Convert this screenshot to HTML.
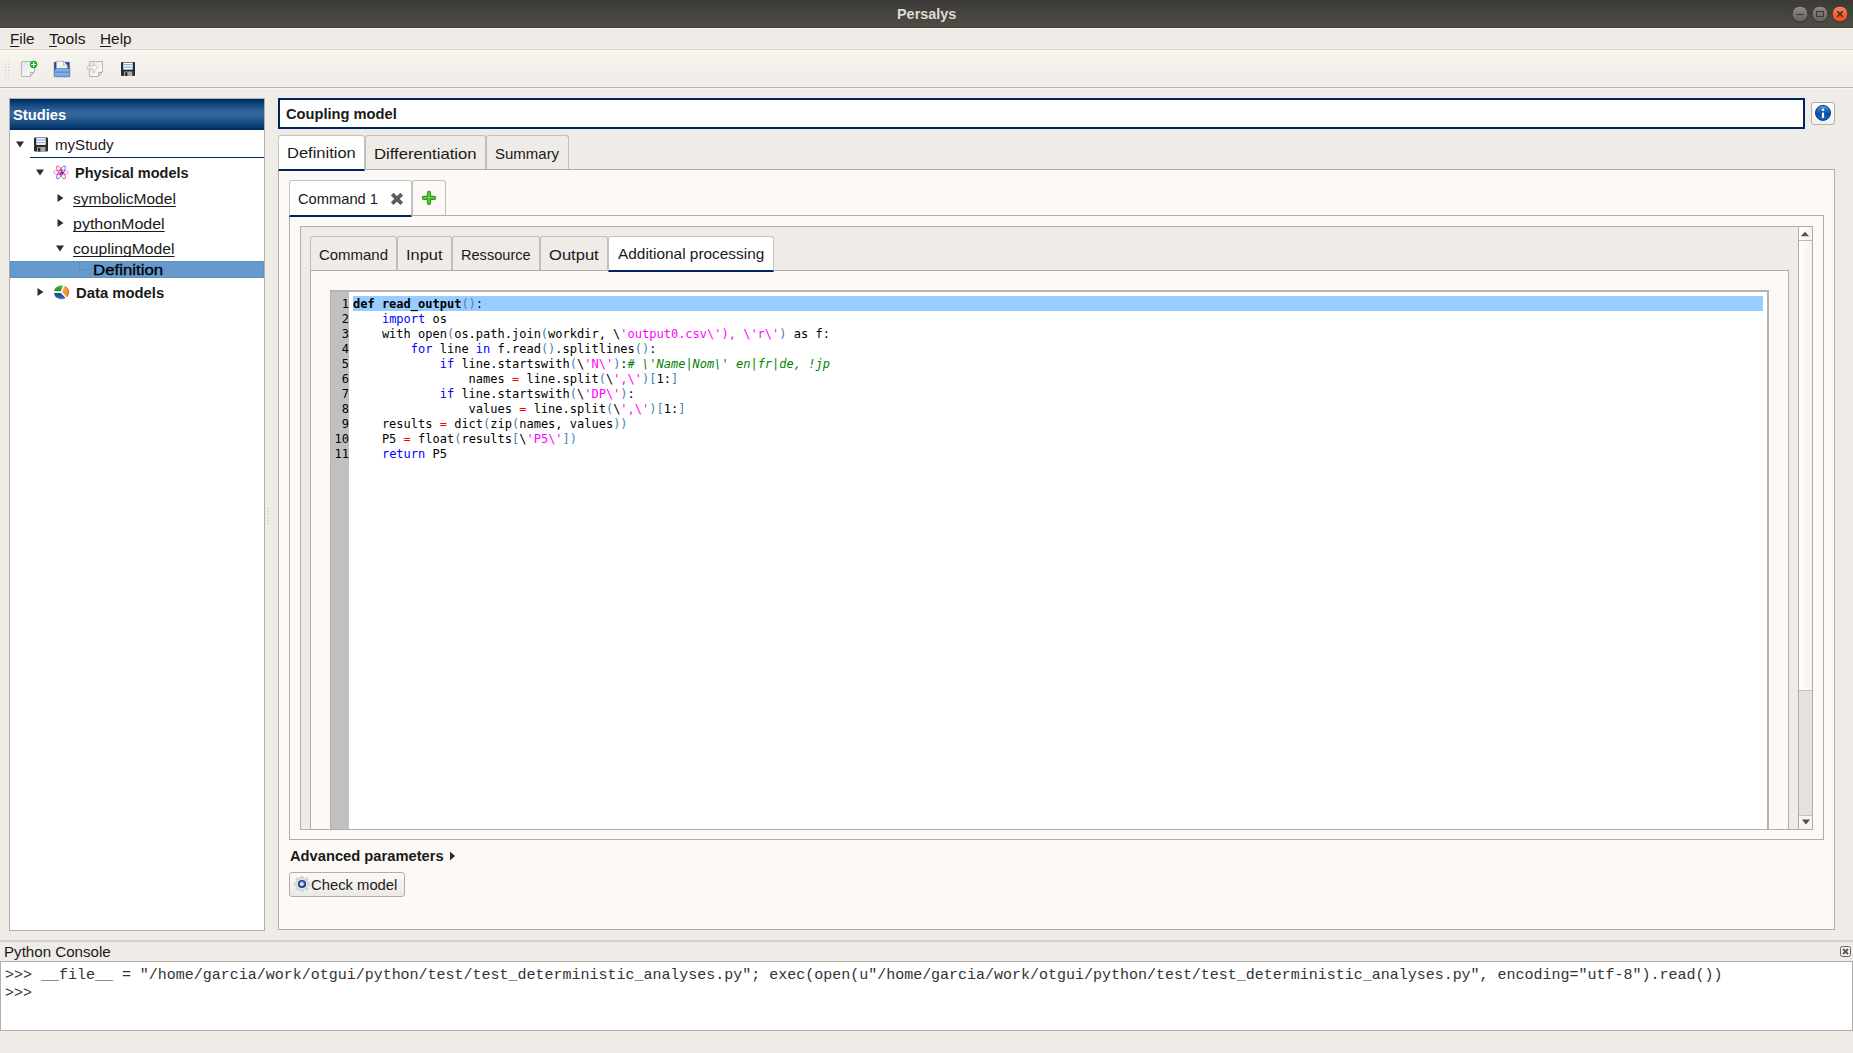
<!DOCTYPE html>
<html lang="en">
<head>
<meta charset="utf-8">
<title>Persalys</title>
<style>
*{box-sizing:border-box;margin:0;padding:0}
html,body{width:1853px;height:1053px;overflow:hidden;background:#efebe7}
body{position:relative;font-family:"Liberation Sans","DejaVu Sans",sans-serif;font-size:14.5px;color:#1a1a1a}
.a{position:absolute}
.t{position:absolute;white-space:nowrap;line-height:20px;height:20px;transform-origin:0 0}
.b{font-weight:bold}
.u{text-decoration:underline;text-underline-offset:2px;text-decoration-thickness:1px;text-decoration-skip-ink:none}
/* title bar */
#titlebar{left:0;top:0;width:1853px;height:29px;background:linear-gradient(#3b3a36,#4f4d46 27px,#45423b 27px,#45423b 28px,#f8f5f0 28px)}
#title{left:897px;top:4px;color:#dfdbd2;font-weight:bold;font-size:14.5px}
/* menu / toolbar */
#menubar{left:0;top:29px;width:1853px;height:20px;background:#efebe7}
#menuline{left:0;top:49px;width:1853px;height:1px;background:#d6d3ce}
#toolbar{left:0;top:50px;width:1853px;height:39px;background:linear-gradient(#fbf9f5 1px,#f7f4ee 1px,#f0ede8 34px,#f2efea 37px,#b8b4b0 37px,#b8b4b0 38px,#f8f5f1 38px)}
#toolline{left:0;top:87px;width:1853px;height:1px;background:#bab6af}
/* panels */
.frame{position:absolute;border:1px solid #b1aeaa;background:#fcf9f6}
.tab{position:absolute;border:1px solid #c0bebb;border-bottom:none;border-radius:3px 3px 0 0;background:#efebe7}
.tab.sel{background:#fff;border-color:#c6c3bd;border-bottom:2px solid #02245e;border-radius:3px 3px 0 0}
.k{color:#0000ff}.p{color:#4682b4}.s{color:#ff00ff}.o{color:#ff0000}.c{color:#008000;font-style:italic}.d{font-weight:bold}
pre{font-family:"DejaVu Sans Mono","Liberation Mono",monospace}
/*FIT*/
#m1{transform:scaleX(1.0509);margin-left:-0.37px}
#m2{transform:scaleX(1.0838);margin-left:0.07px}
#m3{transform:scaleX(1.0600);margin-left:-0.33px}
#studies{transform:scaleX(1.0140);margin-left:-0.27px}
#title{transform:scaleX(0.9944);margin-left:0.21px}
#t1{transform:scaleX(1.0389);margin-left:-0.34px}
#t2{transform:scaleX(0.9993);margin-left:-0.14px}
#t3{transform:scaleX(1.0727);margin-left:-0.33px}
#t4{transform:scaleX(1.1036);margin-left:-0.42px}
#t5{transform:scaleX(1.0860);margin-left:-0.27px}
#t6{transform:scaleX(1.1618);margin-left:-0.38px}
#t7{transform:scaleX(1.0224);margin-left:0.79px}
#r0{transform:scaleX(1.0109);margin-left:0.60px}
#r1{transform:scaleX(1.1366);margin-left:-0.44px}
#r2{transform:scaleX(1.1500);margin-left:-0.24px}
#r3{transform:scaleX(1.0334);margin-left:-0.34px}
#r4{transform:scaleX(1.0122);margin-left:-0.46px}
#s1{transform:scaleX(1.0312);margin-left:-0.24px}
#s2{transform:scaleX(1.1304);margin-left:-0.47px}
#s3{transform:scaleX(1.0048);margin-left:-0.31px}
#s4{transform:scaleX(1.1421);margin-left:-0.29px}
#s5{transform:scaleX(1.0612);margin-left:0.68px}
#adv{transform:scaleX(1.0140);margin-left:0.77px}
#chk{transform:scaleX(1.0205);margin-left:0.15px}
#pc{transform:scaleX(1.0425);margin-left:-0.43px}
/*ENDFIT*/
</style>
</head>
<body>
<!-- TITLE BAR -->
<div id="titlebar" class="a"></div>
<div id="title" class="t">Persalys</div>
<svg class="a" style="left:1790px;top:4px" width="60" height="20" viewBox="0 0 60 20">
<defs><linearGradient id="wg" x1="0" y1="0" x2="0" y2="1"><stop offset="0" stop-color="#8e8c84"/><stop offset="1" stop-color="#64625b"/></linearGradient>
<linearGradient id="wr" x1="0" y1="0" x2="0" y2="1"><stop offset="0" stop-color="#f68a62"/><stop offset=".5" stop-color="#ea6535"/><stop offset="1" stop-color="#e35420"/></linearGradient></defs>
<circle cx="10" cy="10" r="8" fill="url(#wg)" stroke="#34332f" stroke-width="1"/>
<circle cx="30" cy="10" r="8" fill="url(#wg)" stroke="#34332f" stroke-width="1"/>
<circle cx="50" cy="10" r="8" fill="url(#wr)" stroke="#3a2f29" stroke-width="1"/>
<path d="M6.200 10.500h7.600" stroke="#3b3a35" stroke-width="1.100"/>
<rect x="26.500" y="7.500" width="7" height="5" fill="none" stroke="#3b3a35" stroke-width="1.100"/>
<path d="M47.300 7.300l5.400 5.400M52.700 7.300l-5.400 5.400" stroke="#3a2413" stroke-width="1.300"/>
</svg>
<!-- MENU -->
<div id="menubar" class="a"></div>
<div id="menuline" class="a"></div>
<div id="toolbar" class="a"></div>
<div class="t" id="m1" style="left:10px;top:29px"><span class="u">F</span>ile</div>
<div class="t" id="m2" style="left:49px;top:29px"><span class="u">T</span>ools</div>
<div class="t" id="m3" style="left:100px;top:29px"><span class="u">H</span>elp</div>

<svg class="a" style="left:4px;top:60px" width="6" height="18" viewBox="0 0 6 18"><g fill="#cfccc6"><rect x="1" y="1" width="1" height="1"/><rect x="4" y="1" width="1" height="1"/><rect x="1" y="4" width="1" height="1"/><rect x="4" y="4" width="1" height="1"/><rect x="1" y="7" width="1" height="1"/><rect x="4" y="7" width="1" height="1"/><rect x="1" y="10" width="1" height="1"/><rect x="4" y="10" width="1" height="1"/><rect x="1" y="13" width="1" height="1"/><rect x="4" y="13" width="1" height="1"/><rect x="1" y="16" width="1" height="1"/><rect x="4" y="16" width="1" height="1"/></g></svg>
<!-- new -->
<svg class="a" style="left:20px;top:60px" width="18" height="18" viewBox="0 0 18 18">
<defs><linearGradient id="pg" x1="0" y1="0" x2="1" y2="1"><stop offset="0" stop-color="#e4e4e4"/><stop offset="1" stop-color="#ffffff"/></linearGradient></defs>
<path d="M2 1.5h12.5v10l-4.5 5H2a.6.6 0 0 1-.6-.6V2.100a.6.6 0 0 1 .6-.6z" fill="url(#pg)" stroke="#b5b5b5" stroke-width="1"/>
<path d="M10 16.500c.8-1 .9-2.600.4-4.300 1.500.6 3 .4 4.100-.7z" fill="#fff" stroke="#9a9a9a" stroke-width=".8"/>
<circle cx="13.600" cy="4.500" r="3.700" fill="#1fb01f"/><path d="M11.200 4.500h4.800M13.600 2.100v4.800" stroke="#fff" stroke-width="1.100"/>
</svg>
<!-- open -->
<svg class="a" style="left:53px;top:60px" width="18" height="18" viewBox="0 0 18 18">
<defs><linearGradient id="fb" x1="0" y1="0" x2="0" y2="1"><stop offset="0" stop-color="#9fc0e6"/><stop offset=".5" stop-color="#5b8fd0"/><stop offset=".55" stop-color="#8fb4e2"/><stop offset="1" stop-color="#6f9fda"/></linearGradient></defs>
<path d="M1.300 2.300h15v8h-15z" fill="#1f4f97" stroke="#163a72" stroke-width=".6"/>
<path d="M3.500 1.200h6.800l4 4.200v6h-10.800z" fill="#f4f4f4" stroke="#aaa" stroke-width=".7"/>
<path d="M10.300 1.200c.5 1.500.4 2.800 0 4.200 1.500-.5 2.800-.5 4 0z" fill="#fff" stroke="#999" stroke-width=".6"/>
<path d="M1.200 9.800l3-1.300h12.600v7.600a.7.7 0 0 1-.7.700H1.900a.7.700 0 0 1-.7-.7z" fill="url(#fb)" stroke="#3f6fb3" stroke-width=".7"/>
</svg>
<!-- import -->
<svg class="a" style="left:86px;top:60px" width="18" height="18" viewBox="0 0 18 18">
<path d="M4 1.500h12.500v10l-4.500 5H4a.6.6 0 0 1-.6-.6V2.100a.6.6 0 0 1 .6-.6z" fill="url(#pg)" stroke="#b5b5b5" stroke-width="1"/>
<path d="M12 16.500c.8-1 .9-2.600.4-4.300 1.500.6 3 .4 4.100-.7z" fill="#fff" stroke="#9a9a9a" stroke-width=".8"/>
<path d="M1.200 6.200h6v-2.600l4.300 3.900-4.300 3.900v-2.600h-6z" fill="#fff" stroke="#bdbdbd" stroke-width=".9" stroke-linejoin="round"/>
<path d="M6 11.500l1.500 2 2-2" fill="none" stroke="#c8c8c8" stroke-width=".9"/>
</svg>
<!-- save -->
<svg class="a" style="left:120px;top:60px" width="16" height="18" viewBox="0 0 16 18">
<rect x="1" y="2" width="14" height="14" rx="1" fill="#2b2b2f"/>
<rect x="3.300" y="2.600" width="9.400" height="7" fill="#fff"/>
<rect x="4.200" y="4" width="7.600" height="1.200" fill="#88aadd"/><rect x="4.200" y="6.600" width="7.600" height="1.200" fill="#88aadd"/>
<rect x="4" y="11.500" width="8.400" height="4.500" fill="#a9a9a9"/><rect x="5" y="12.300" width="2.400" height="3.700" fill="#2b2b2f"/>
</svg>

<div class="a" style="left:9px;top:98px;width:256px;height:833px;border:1px solid #b1aeaa;background:#fff"></div>
<div class="a" style="left:10px;top:99px;width:254px;height:31px;background:linear-gradient(#00275f 0%,#002d65 3%,#0c4178 14%,#27598f 32%,#32669a 42%,#34689b 48%,#306497 56%,#235790 66%,#134779 81%,#063a6f 93%,#002c64 97%,#00235b 100%)"></div>
<div class="t b" id="studies" style="left:13px;top:105px;color:#fff">Studies</div>
<!-- tree -->
<svg class="a" style="left:15px;top:140px" width="10" height="9" viewBox="0 0 10 9"><path d="M1 1.500h8l-4 6z" fill="#2e2e2e"/></svg>
<svg class="a" style="left:33px;top:137px" width="16" height="15" viewBox="0 0 16 15">
<rect x="1" y=".5" width="14" height="14" rx="1" fill="#2b2b2f"/><rect x="3.300" y="1.100" width="9.400" height="6.800" fill="#fff"/>
<rect x="4.200" y="2.500" width="7.600" height="1.200" fill="#88aadd"/><rect x="4.200" y="5" width="7.600" height="1.200" fill="#88aadd"/>
<rect x="4" y="10" width="8.400" height="4.500" fill="#a9a9a9"/><rect x="5" y="10.800" width="2.400" height="3.700" fill="#2b2b2f"/></svg>
<div class="t" id="t1" style="left:55px;top:135px">myStudy</div>
<div class="a" style="left:30px;top:157px;width:234px;height:1px;background:#02245e"></div>
<svg class="a" style="left:35px;top:168px" width="10" height="9" viewBox="0 0 10 9"><path d="M1 1.500h8l-4 6z" fill="#2e2e2e"/></svg>
<svg class="a" style="left:53px;top:165px" width="16" height="15" viewBox="0 0 16 15">
<g fill="none" stroke-width=".85"><ellipse cx="8" cy="7.400" rx="7.500" ry="2.300" stroke="#ff5cff"/><ellipse cx="8" cy="7.400" rx="7.500" ry="2.300" stroke="#ff4a4a" transform="rotate(58 8 7.400)"/><ellipse cx="8" cy="7.400" rx="7.500" ry="2.300" stroke="#5a5aff" transform="rotate(-58 8 7.400)"/></g>
<circle cx="8.300" cy="5.900" r="1.300" fill="#ff3000"/><circle cx="9.300" cy="7.800" r="1.200" fill="#1a1ad0"/><circle cx="7.300" cy="8.600" r="1.300" fill="#f02020"/><circle cx="7" cy="6.800" r=".9" fill="#8fe8f0"/><circle cx="9.600" cy="6.300" r=".8" fill="#8fe8f0"/></svg>
<div class="t b" id="t2" style="left:75px;top:163px">Physical models</div>
<svg class="a" style="left:56px;top:193px" width="9" height="10" viewBox="0 0 9 10"><path d="M1.500 1v8l6-4z" fill="#2e2e2e"/></svg>
<div class="t u" id="t3" style="left:73px;top:189px">symbolicModel</div>
<svg class="a" style="left:56px;top:218px" width="9" height="10" viewBox="0 0 9 10"><path d="M1.500 1v8l6-4z" fill="#2e2e2e"/></svg>
<div class="t u" id="t4" style="left:73px;top:214px">pythonModel</div>
<svg class="a" style="left:55px;top:244px" width="10" height="9" viewBox="0 0 10 9"><path d="M1 1.500h8l-4 6z" fill="#2e2e2e"/></svg>
<div class="t u" id="t5" style="left:73px;top:239px">couplingModel</div>
<div class="a" style="left:10px;top:261px;width:254px;height:17px;background:#6699cc;border:1px solid #5b90c9"></div>
<div class="a" style="left:79px;top:262px;width:11px;height:8px;border-left:1px solid #5e8dbf;border-bottom:1px solid #5e8dbf"></div>
<div class="t" id="t6" style="left:93px;top:260px;color:#000;-webkit-text-stroke:.3px #000">Definition</div>
<svg class="a" style="left:36px;top:287px" width="9" height="10" viewBox="0 0 9 10"><path d="M1.500 1v8l6-4z" fill="#2e2e2e"/></svg>
<svg class="a" style="left:53px;top:284px" width="17" height="17" viewBox="0 0 17 17">
<defs><linearGradient id="pgr" x1="0" y1="0" x2="0" y2="1"><stop offset="0" stop-color="#5cc63c"/><stop offset="1" stop-color="#15801a"/></linearGradient>
<linearGradient id="por" x1="0" y1="0" x2="1" y2="1"><stop offset="0" stop-color="#f8b45a"/><stop offset="1" stop-color="#ee8410"/></linearGradient>
<linearGradient id="pbl" x1="0" y1="0" x2="0" y2="1"><stop offset="0" stop-color="#1d4c8c"/><stop offset=".6" stop-color="#2a5c9c"/><stop offset="1" stop-color="#5aa0d8"/></linearGradient></defs>
<g stroke="#fff" stroke-width="1.400" stroke-linejoin="round">
<path d="M8.100 8.300L.4 8A7.900 7.300 0 0 1 11.300 1.300z" fill="url(#pgr)"/>
<path d="M8.100 8.300L11.300 1.300A7.900 7.300 0 0 1 13.600 14z" fill="url(#por)"/>
<path d="M8.100 8.300L13.600 14A7.900 7.300 0 0 1 .4 8z" fill="url(#pbl)"/></g>
<path d="M11.800 2.400A7 6.500 0 0 1 13.400 13" fill="none" stroke="#c65a14" stroke-width=".8"/>
</svg>
<div class="t b" id="t7" style="left:75px;top:283px">Data models</div>
<!-- splitter dots -->
<svg class="a" style="left:266px;top:508px" width="3" height="18" viewBox="0 0 3 18"><g fill="#bfbcb8"><rect x="1" y="0" width="1" height="1"/><rect x="1" y="3" width="1" height="1"/><rect x="1" y="6" width="1" height="1"/><rect x="1" y="9" width="1" height="1"/><rect x="1" y="12" width="1" height="1"/><rect x="1" y="15" width="1" height="1"/></g></svg>

<!-- title field -->
<div class="a" style="left:278px;top:98px;width:1527px;height:31px;border:2px solid #02245e;background:#fff"></div>
<div class="t b" id="r0" style="left:285px;top:104px">Coupling model</div>
<div class="a" style="left:1811px;top:102px;width:24px;height:23px;border:1px solid #b3b0ac;border-radius:3px;background:linear-gradient(#fefefd,#f3f0ed)"></div>
<svg class="a" style="left:1814px;top:104px" width="18" height="18" viewBox="0 0 18 18"><defs><linearGradient id="ig" x1="0" y1="0" x2="0" y2="1"><stop offset="0" stop-color="#6aa6dc"/><stop offset=".25" stop-color="#2f78c0"/><stop offset=".55" stop-color="#0a4c9c"/><stop offset=".85" stop-color="#0a68cc"/><stop offset="1" stop-color="#0a5cb8"/></linearGradient></defs><circle cx="9" cy="8.900" r="7.500" fill="url(#ig)" stroke="#013a88" stroke-width="1"/><circle cx="9" cy="5.800" r="1.250" fill="#fff"/><rect x="7.900" y="8.400" width="2.200" height="5.500" rx=".6" fill="#fff"/></svg>
<!-- main tab pane -->
<div class="frame" style="left:278px;top:169px;width:1557px;height:761px"></div>
<div class="tab sel" style="left:278px;top:135px;width:87px;height:36px"></div>
<div class="t" id="r1" style="left:287px;top:143px">Definition</div>
<div class="tab" style="left:365px;top:135px;width:121px;height:34px"></div>
<div class="t" id="r2" style="left:374px;top:144px">Differentiation</div>
<div class="tab" style="left:486px;top:135px;width:83px;height:34px"></div>
<div class="t" id="r3" style="left:495px;top:144px">Summary</div>
<!-- command tab pane -->
<div class="frame" style="left:289px;top:215px;width:1535px;height:625px"></div>
<div class="tab sel" style="left:289px;top:180px;width:123px;height:37px"></div>
<div class="t" id="r4" style="left:298px;top:189px">Command 1</div>
<svg class="a" style="left:390px;top:192px" width="14" height="14" viewBox="0 0 14 14"><path d="M2.200 2.200l9.500 9.500M11.700 2.200l-9.500 9.500" stroke="#5d5d5b" stroke-width="3.800" stroke-linecap="butt"/></svg>
<div class="tab" style="left:412px;top:180px;width:34px;height:35px;background:#fcf9f6"></div>
<svg class="a" style="left:421px;top:190px" width="16" height="16" viewBox="0 0 16 16"><path d="M8 2.800v10.300M2.900 7.950h10.200" stroke="#1f9410" stroke-width="4.200" stroke-linecap="round"/><path d="M8 2.800v10.300M2.900 7.950h10.200" stroke="#46b82c" stroke-width="2.600" stroke-linecap="round"/><path d="M8 2.900v10M3 7.600h10" stroke="#7fd862" stroke-width="1" stroke-linecap="round" opacity=".8"/></svg>
<!-- scroll area -->
<div class="a" id="scroll" style="left:300px;top:226px;width:1513px;height:604px;border:1px solid #b1aeaa;background:#efebe7;overflow:hidden">
  <div class="a" style="left:9px;top:43px;width:1479px;height:600px;border:1px solid #b1aeaa;background:#fcf9f6"></div>
  <div class="tab" style="left:9px;top:9px;width:87px;height:34px"></div>
  <div class="tab" style="left:96px;top:9px;width:55px;height:34px"></div>
  <div class="tab" style="left:151px;top:9px;width:88px;height:34px"></div>
  <div class="tab" style="left:239px;top:9px;width:68px;height:34px"></div>
  <div class="tab sel" style="left:307px;top:9px;width:166px;height:36px"></div>
  <!-- editor -->
  <div class="a" style="left:29px;top:63px;width:1439px;height:600px;border-top:2px solid #b7b3ac;border-right:2px solid #b7b3ac;background:#fff"></div>
  <div class="a" style="left:29px;top:65px;width:19px;height:600px;background:#c0c0c0;border-left:1px solid #b3b1ae"></div>
  <div class="a" style="left:52px;top:69px;width:1410px;height:15px;background:#99ccff"></div>
  <pre class="a" id="nums" style="left:29px;top:70px;width:19px;text-align:right;font-size:12px;line-height:15px;color:#000">1
2
3
4
5
6
7
8
9
10
11</pre>
  <pre class="a" id="code" style="left:52px;top:70px;font-size:12px;line-height:15px;color:#000"><span class="d">def read_output</span><span class="p">()</span>:
    <span class="k">import</span> os
    with open<span class="p">(</span>os.path.join<span class="p">(</span>workdir, \<span class="s">'output0.csv\'), \'r\'</span><span class="p">)</span> as f:
        <span class="k">for</span> line <span class="k">in</span> f.read<span class="p">()</span>.splitlines<span class="p">()</span>:
            <span class="k">if</span> line.startswith<span class="p">(</span>\<span class="s">'N\'</span><span class="p">)</span>:<span class="c"># \'Name|Nom\' en|fr|de, !jp</span>
                names <span class="o">=</span> line.split<span class="p">(</span>\<span class="s">',\'</span><span class="p">)[</span>1:<span class="p">]</span>
            <span class="k">if</span> line.startswith<span class="p">(</span>\<span class="s">'DP\'</span><span class="p">)</span>:
                values <span class="o">=</span> line.split<span class="p">(</span>\<span class="s">',\'</span><span class="p">)[</span>1:<span class="p">]</span>
    results <span class="o">=</span> dict<span class="p">(</span>zip<span class="p">(</span>names, values<span class="p">))</span>
    P5 <span class="o">=</span> float<span class="p">(</span>results<span class="p">[</span>\<span class="s">'P5\'</span><span class="p">])</span>
    <span class="k">return</span> P5</pre>
  <!-- scrollbar -->
  <div class="a" style="left:1497px;top:0;width:15px;height:602px;border-left:1px solid #b1aeaa;background:linear-gradient(90deg,#ffffff,#fbfaf8 40%,#f1efec)"></div>
  <div class="a" style="left:1498px;top:0;width:14px;height:14px;border-bottom:1px solid #bab7b3;background:linear-gradient(90deg,#ffffff,#fbfaf8 40%,#f2f0ed)"></div>
  <svg class="a" style="left:1499px;top:3px" width="10" height="8" viewBox="0 0 10 8"><path d="M.8 6.200h8.400l-4.200-4.400z" fill="#555"/></svg>
  <div class="a" style="left:1498px;top:463px;width:14px;height:125px;background:#e4e2de;border-top:1px solid #c5c2bc"></div>
  <div class="a" style="left:1498px;top:588px;width:14px;height:14px;border-top:1px solid #c5c2bc;background:#f6f5f3"></div>
  <svg class="a" style="left:1500px;top:591px" width="10" height="8" viewBox="0 0 10 8"><path d="M1 1.500h8l-4 5z" fill="#4a4a4a"/></svg>
</div>
<div class="t" id="s1" style="left:319px;top:245px">Command</div>
<div class="t" id="s2" style="left:406px;top:245px">Input</div>
<div class="t" id="s3" style="left:461px;top:245px">Ressource</div>
<div class="t" id="s4" style="left:549px;top:245px">Output</div>
<div class="t" id="s5" style="left:617px;top:244px">Additional processing</div>
<!-- bottom -->
<div class="t b" id="adv" style="left:289px;top:846px">Advanced parameters</div>
<svg class="a" style="left:449px;top:851px" width="7" height="10" viewBox="0 0 7 10"><path d="M1 .5v9l5-4.500z" fill="#2e2e2e"/></svg>
<div class="a" style="left:289px;top:872px;width:116px;height:25px;border:1px solid #b1aeaa;border-radius:3px;background:linear-gradient(#fbfaf8,#ece9e5)"></div>
<svg class="a" style="left:293px;top:875px" width="18" height="18" viewBox="0 0 18 18"><g fill="#d3d3d3"><rect x="7.300" y=".9" width="3.400" height="4" rx=".8" transform="rotate(0 9 9)"/><rect x="7.300" y=".9" width="3.400" height="4" rx=".8" transform="rotate(45 9 9)"/><rect x="7.300" y=".9" width="3.400" height="4" rx=".8" transform="rotate(90 9 9)"/><rect x="7.300" y=".9" width="3.400" height="4" rx=".8" transform="rotate(135 9 9)"/><rect x="7.300" y=".9" width="3.400" height="4" rx=".8" transform="rotate(180 9 9)"/><rect x="7.300" y=".9" width="3.400" height="4" rx=".8" transform="rotate(225 9 9)"/><rect x="7.300" y=".9" width="3.400" height="4" rx=".8" transform="rotate(270 9 9)"/><rect x="7.300" y=".9" width="3.400" height="4" rx=".8" transform="rotate(315 9 9)"/><circle cx="9" cy="9" r="6.200"/></g><circle cx="9" cy="9" r="5.300" fill="#e6e6e6"/><circle cx="9" cy="9" r="4.100" fill="#1d3f84"/><circle cx="9" cy="8.700" r="2.500" fill="#6f8fc8"/><path d="M7.800 7.200l3.300 1.700-3.300 2z" fill="#eef2fb"/><circle cx="8.600" cy="8.900" r="1.500" fill="#e3eaf8"/></svg>
<div class="t" id="chk" style="left:311px;top:875px">Check model</div>

<div class="a" style="left:0;top:940px;width:1853px;height:2px;background:#d3d2d0"></div>
<div class="t" id="pc" style="left:4px;top:942px">Python Console</div>
<svg class="a" style="left:1840px;top:946px" width="11" height="11" viewBox="0 0 11 11"><rect x=".5" y=".5" width="10" height="10" rx="2" fill="#f6f4f1" stroke="#66645f" stroke-width="1"/><path d="M3 3l5 5M8 3l-5 5" stroke="#5f5e5a" stroke-width="2"/></svg>
<div class="a" style="left:0;top:961px;width:1853px;height:70px;border:1px solid #b1aeaa;background:#fff"></div>
<pre class="a" id="con" style="left:5px;top:967px;letter-spacing:-0.01px;font-family:'Liberation Mono','DejaVu Sans Mono',monospace;font-size:15px;line-height:18px;color:#333">&gt;&gt;&gt; __file__ = "/home/garcia/work/otgui/python/test/test_deterministic_analyses.py"; exec(open(u"/home/garcia/work/otgui/python/test/test_deterministic_analyses.py", encoding="utf-8").read())
&gt;&gt;&gt; </pre>

</body>
</html>
